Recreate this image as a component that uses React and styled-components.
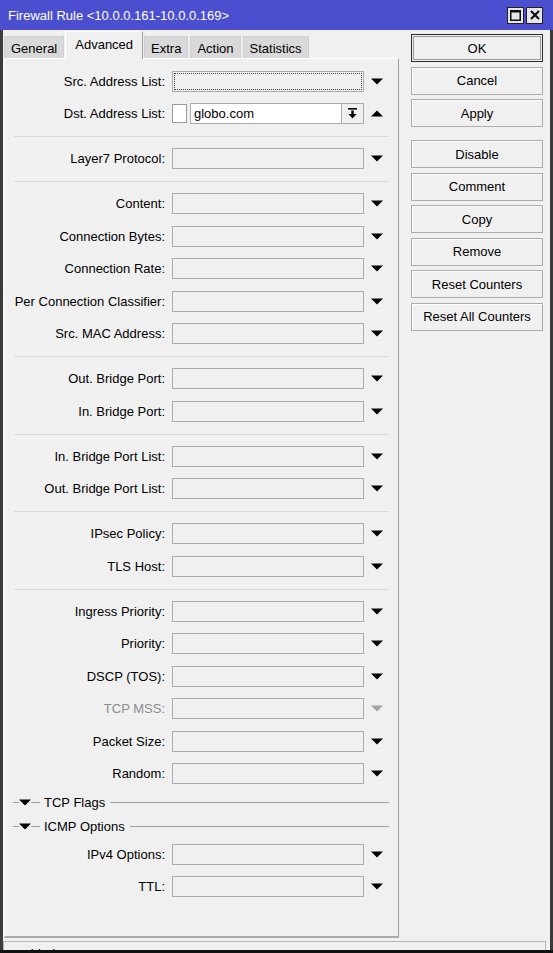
import React from 'react';
import styled, { createGlobalStyle, css } from 'styled-components';

const Global = createGlobalStyle`
  html, body { margin: 0; padding: 0; background: #111; }
  body { font-family: "Liberation Sans", Arial, sans-serif; font-size: 13px; color: #000; }
  * { box-sizing: border-box; }
`;

const Frame = styled.div`
  width: 553px;
  height: 953px;
  display: flex;
  flex-direction: column;
  background: #111;
  overflow: hidden;
`;

const TitleBar = styled.div`
  height: 30px;
  flex: none;
  background: #4b4fcf;
  display: flex;
  align-items: center;
  padding: 0 10px 0 8px;
  color: #fff;
  font-size: 13px;
`;

const TitleText = styled.div`
  flex: 1;
  white-space: nowrap;
`;

const TitleButtons = styled.div`
  display: flex;
  gap: 2px;
`;

const TitleButton = styled.div`
  width: 17px;
  height: 17px;
  background: #e6e6e6;
  border: 1px solid #222;
  display: flex;
  align-items: center;
  justify-content: center;
`;

const Body = styled.div`
  height: 920px;
  flex: none;
  background: #f0f0f0;
  border-left: 3px solid #3c3c3c;
  border-right: 3px solid #3a3a3a;
  display: flex;
  flex-direction: column;
  overflow: hidden;
`;

const Main = styled.div`
  height: 908px;
  flex: none;
  display: flex;
`;

const LeftCol = styled.div`
  width: 396px;
  display: flex;
  flex-direction: column;
  padding-left: 1px;
`;

const TabStrip = styled.div`
  height: 28px;
  flex: none;
  display: flex;
  align-items: flex-end;
  gap: 2px;
  position: relative;
  z-index: 1;
`;

const Tab = styled.div`
  height: 22px;
  padding: 0 6px;
  display: flex;
  align-items: center;
  background: #d9d9d9;
  border: 1px solid #cfcfcf;
  border-bottom: none;
  white-space: nowrap;
  padding-top: 2px;
  ${(p) =>
    p.$active &&
    css`
      height: 28px;
      margin: 0 -1px -1px -1px;
      padding: 0 9px 3px 9px;
      background: #f0f0f0;
      border-top: 1px solid #fff;
      border-left: 1px solid #fff;
      border-right: 1px solid #a0a0a0;
    `}
`;

const Panel = styled.div`
  flex: 1;
  border-top: 1px solid #fff;
  border-left: 1px solid #fff;
  border-right: 1px solid #a0a0a0;
  border-bottom: 2px solid #a8a8a8;
  padding-top: 6px;
  display: flex;
  flex-direction: column;
`;

const Row = styled.div`
  height: 32.5px;
  flex: none;
  display: flex;
  align-items: center;
`;

const Label = styled.div`
  width: 160px;
  margin-right: 7px;
  text-align: right;
  white-space: nowrap;
  color: ${(p) => (p.$disabled ? '#8d8d8d' : '#000')};
`;

const Field = styled.div`
  width: 192px;
  height: 21px;
  border: 1px solid #acacac;
  background: #f0f0f0;
  position: relative;
  ${(p) =>
    p.$focused &&
    css`
      &::after {
        content: '';
        position: absolute;
        inset: 1px;
        border: 1px dotted #444;
      }
    `}
`;

const FieldGroup = styled.div`
  width: 192px;
  height: 21px;
  display: flex;
  align-items: center;
`;

const Check = styled.div`
  width: 15px;
  height: 19px;
  flex: none;
  background: #fff;
  border: 1px solid #9a9a9a;
  margin-right: 3px;
`;

const TextInput = styled.div`
  flex: 1;
  height: 21px;
  background: #fff;
  border: 1px solid #acacac;
  display: flex;
  align-items: center;
  padding-left: 3px;
`;

const SmallButton = styled.div`
  width: 22px;
  height: 21px;
  flex: none;
  border: 1px solid #acacac;
  border-left: none;
  background: #f0f0f0;
  display: flex;
  align-items: center;
  justify-content: center;
`;

const ArrowBox = styled.div`
  width: 14px;
  margin-left: 6px;
  display: flex;
  align-items: center;
  justify-content: center;
`;

const Separator = styled.div`
  height: 1px;
  flex: none;
  margin: 6px 9px 5.5px 9px;
  background: #d9d9d9;
`;

const GroupHeader = styled.div`
  height: 24px;
  flex: none;
  display: flex;
  align-items: center;
  padding: 0 9px 0 8px;
`;

const HLine = styled.div`
  height: 1px;
  background: #a0a0a0;
  width: ${(p) => (p.$w ? `${p.$w}px` : 'auto')};
  flex: ${(p) => (p.$w ? 'none' : '1')};
`;

const HeaderText = styled.div`
  margin: 0 5px 0 4px;
  white-space: nowrap;
`;

const RightCol = styled.div`
  width: 132px;
  margin-left: 12px;
  padding-top: 4px;
  display: flex;
  flex-direction: column;
`;

const Button = styled.div`
  height: 28px;
  flex: none;
  margin-bottom: 4.5px;
  margin-top: ${(p) => (p.$gapBefore ? '8.5px' : '0')};
  border: 1px solid #adadad;
  background: #f0f0f0;
  box-shadow: inset 1px 1px 0 #fdfdfd;
  display: flex;
  align-items: center;
  justify-content: center;
  white-space: nowrap;
  ${(p) =>
    p.$default &&
    css`
      border: 1px solid #2b2b2b;
      box-shadow: inset 0 0 0 1px #f0f0f0, inset 0 0 0 2px #9a9a9a;
    `}
`;

const StatusBar = styled.div`
  margin-top: 3px;
  height: 22px;
  flex: none;
  margin-right: 4px;
  border: 1px solid #b5b5b5;
  padding: 4px 0 0 5px;
`;

const DownArrow = ({ color = '#000' }) => (
  <svg width="12" height="7" viewBox="0 0 12 7">
    <path d="M0 0.5 H12 L6 6.5 Z" fill={color} />
  </svg>
);

const UpArrow = () => (
  <svg width="12" height="7" viewBox="0 0 12 7">
    <path d="M0 6.5 H12 L6 0.5 Z" fill="#000" />
  </svg>
);

const DropIcon = () => (
  <svg width="9" height="11" viewBox="0 0 9 11">
    <rect x="0" y="0" width="9" height="1.6" fill="#000" />
    <rect x="3.3" y="2.5" width="2.4" height="4" fill="#000" />
    <path d="M0.5 6 H8.5 L4.5 10.5 Z" fill="#000" />
  </svg>
);

const sections = [
  [{ label: 'Src. Address List:', focused: true }, { label: 'Dst. Address List:', dst: true }],
  [{ label: 'Layer7 Protocol:' }],
  [
    { label: 'Content:' },
    { label: 'Connection Bytes:' },
    { label: 'Connection Rate:' },
    { label: 'Per Connection Classifier:' },
    { label: 'Src. MAC Address:' },
  ],
  [{ label: 'Out. Bridge Port:' }, { label: 'In. Bridge Port:' }],
  [{ label: 'In. Bridge Port List:' }, { label: 'Out. Bridge Port List:' }],
  [{ label: 'IPsec Policy:' }, { label: 'TLS Host:' }],
  [
    { label: 'Ingress Priority:' },
    { label: 'Priority:' },
    { label: 'DSCP (TOS):' },
    { label: 'TCP MSS:', disabled: true },
    { label: 'Packet Size:' },
    { label: 'Random:' },
  ],
];

const tail = [{ label: 'IPv4 Options:' }, { label: 'TTL:' }];

function FieldRow({ row }) {
  if (row.dst) {
    return (
      <Row>
        <Label>{row.label}</Label>
        <FieldGroup>
          <Check />
          <TextInput>globo.com</TextInput>
          <SmallButton>
            <DropIcon />
          </SmallButton>
        </FieldGroup>
        <ArrowBox>
          <UpArrow />
        </ArrowBox>
      </Row>
    );
  }
  return (
    <Row>
      <Label $disabled={row.disabled}>{row.label}</Label>
      <Field $focused={row.focused} />
      <ArrowBox>
        <DownArrow color={row.disabled ? '#a3a3a3' : '#000'} />
      </ArrowBox>
    </Row>
  );
}

function Group({ title }) {
  return (
    <GroupHeader>
      <HLine $w={6} />
      <DownArrow />
      <HLine $w={9} />
      <HeaderText>{title}</HeaderText>
      <HLine />
    </GroupHeader>
  );
}

const tabs = ['General', 'Advanced', 'Extra', 'Action', 'Statistics'];

const buttons = [
  { t: 'OK', def: true },
  { t: 'Cancel' },
  { t: 'Apply' },
  { t: 'Disable', gap: true },
  { t: 'Comment' },
  { t: 'Copy' },
  { t: 'Remove' },
  { t: 'Reset Counters' },
  { t: 'Reset All Counters' },
];

export default function App() {
  return (
    <>
      <Global />
      <Frame>
        <TitleBar>
          <TitleText>Firewall Rule &lt;10.0.0.161-10.0.0.169&gt;</TitleText>
          <TitleButtons>
            <TitleButton>
              <svg width="11" height="11" viewBox="0 0 11 11">
                <rect x="0.75" y="0.75" width="9.5" height="9.5" fill="none" stroke="#111" strokeWidth="1.5" />
                <rect x="0.5" y="0.5" width="10" height="2" fill="#111" />
              </svg>
            </TitleButton>
            <TitleButton>
              <svg width="10" height="10" viewBox="0 0 10 10">
                <path d="M1 1 L9 9 M9 1 L1 9" stroke="#111" strokeWidth="2.2" />
              </svg>
            </TitleButton>
          </TitleButtons>
        </TitleBar>
        <Body>
          <Main>
            <LeftCol>
              <TabStrip>
                {tabs.map((t) => (
                  <Tab key={t} $active={t === 'Advanced'}>
                    {t}
                  </Tab>
                ))}
              </TabStrip>
              <Panel>
                {sections.map((sec, i) => (
                  <React.Fragment key={i}>
                    {i > 0 && <Separator />}
                    {sec.map((r) => (
                      <FieldRow key={r.label} row={r} />
                    ))}
                  </React.Fragment>
                ))}
                <Group title="TCP Flags" />
                <Group title="ICMP Options" />
                {tail.map((r) => (
                  <FieldRow key={r.label} row={r} />
                ))}
              </Panel>
            </LeftCol>
            <RightCol>
              {buttons.map((b) => (
                <Button key={b.t} $default={b.def} $gapBefore={b.gap}>
                  {b.t}
                </Button>
              ))}
            </RightCol>
          </Main>
          <StatusBar>enabled</StatusBar>
        </Body>
      </Frame>
    </>
  );
}
